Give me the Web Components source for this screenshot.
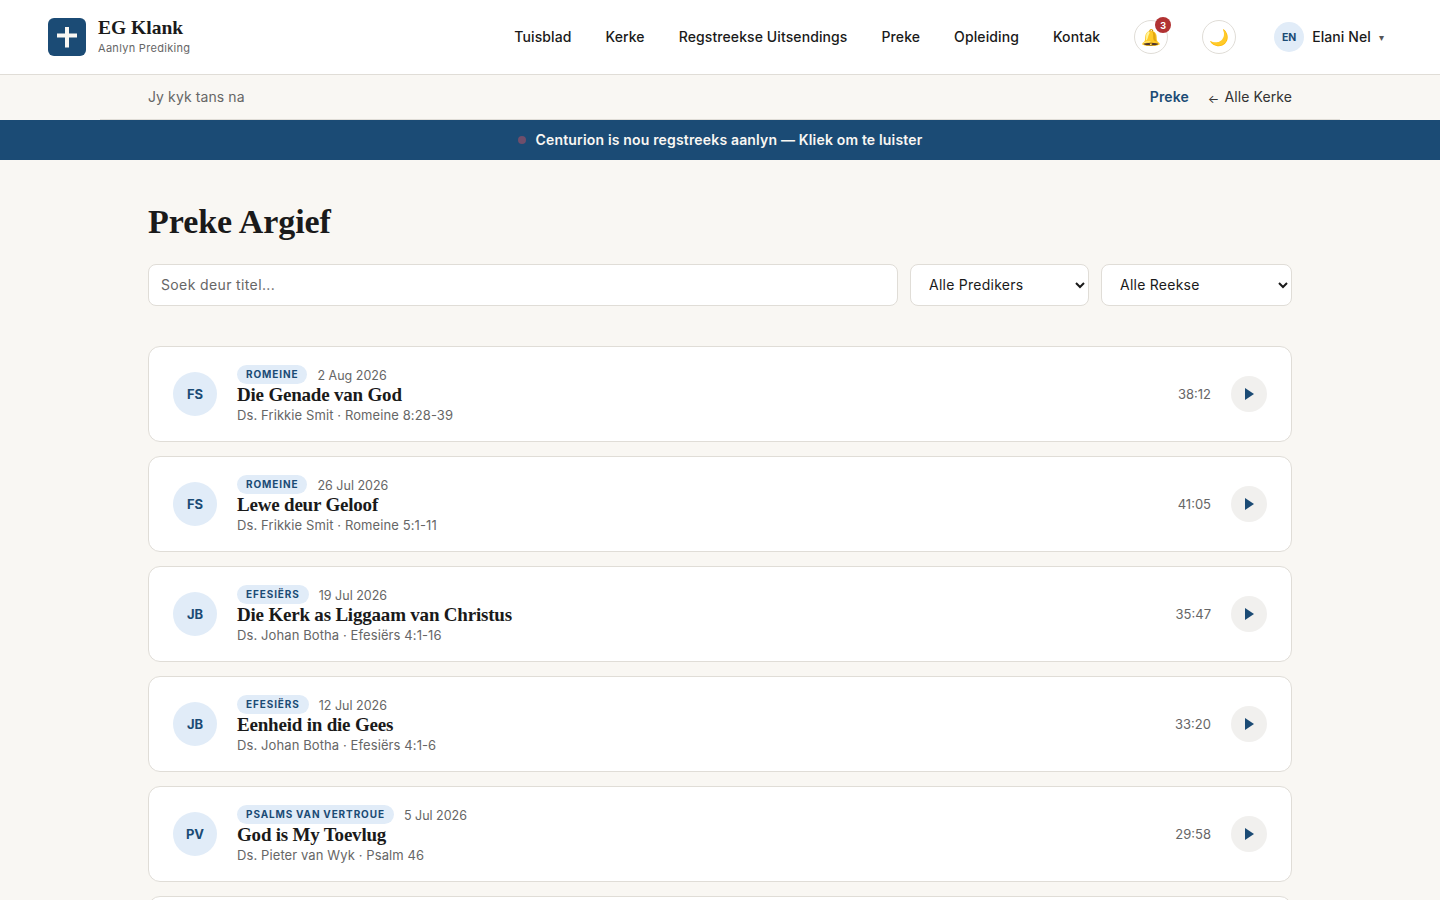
<!DOCTYPE html>
<html lang="af">
<head>
<meta charset="utf-8">
<title>Preke Argief</title>
<style>
    html, body { margin: 0; height: 900px; overflow: hidden; }
    body {
        background: #f9f7f3;
        color: #1a1a1a;
        font-family: "Inter", "Liberation Sans", sans-serif;
    }
</style>
</head>
<body>
<site-header></site-header>
<context-bar></context-bar>
<live-banner>Centurion is nou regstreeks aanlyn — Kliek om te luister</live-banner>
<archive-page>
    <sermon-card initials="FS" series="ROMEINE" date="2 Aug 2026" title="Die Genade van God" meta="Ds. Frikkie Smit · Romeine 8:28-39" time="38:12"></sermon-card>
    <sermon-card initials="FS" series="ROMEINE" date="26 Jul 2026" title="Lewe deur Geloof" meta="Ds. Frikkie Smit · Romeine 5:1-11" time="41:05"></sermon-card>
    <sermon-card initials="JB" series="EFESIËRS" date="19 Jul 2026" title="Die Kerk as Liggaam van Christus" meta="Ds. Johan Botha · Efesiërs 4:1-16" time="35:47"></sermon-card>
    <sermon-card initials="JB" series="EFESIËRS" date="12 Jul 2026" title="Eenheid in die Gees" meta="Ds. Johan Botha · Efesiërs 4:1-6" time="33:20"></sermon-card>
    <sermon-card initials="PV" series="PSALMS VAN VERTROUE" date="5 Jul 2026" title="God is My Toevlug" meta="Ds. Pieter van Wyk · Psalm 46" time="29:58"></sermon-card>
    <sermon-card empty></sermon-card>
</archive-page>

<script>
const SANS = '"Inter", "Liberation Sans", sans-serif';
const SERIF = '"Liberation Serif", serif';

class SiteHeader extends HTMLElement {
    constructor() {
        super();
        this.attachShadow({mode: 'open'});
        this.shadowRoot.innerHTML = `
        <style>
            :host {
                display: flex;
                align-items: center;
                height: 74px;
                padding: 0 48px;
                background: #fff;
                border-bottom: 1px solid #e0ddd7;
                font-family: ${SANS};
            }
            .logo { width: 38px; height: 38px; border-radius: 6px; background: #1b4b75; display: flex; align-items: center; justify-content: center; margin-right: 12px; }
            .brand { display: flex; flex-direction: column; }
            .name { font: bold 19.5px/19px ${SERIF}; color: #1a1a1a; }
            .tag { font-size: 11px; line-height: 16px; letter-spacing: .3px; color: #666; margin-top: 3px; }
            nav { margin-left: auto; display: flex; align-items: center; gap: 34px; }
            nav a { font-size: 14px; line-height: 16px; letter-spacing: .1px; font-weight: 500; color: #1a1a1a; }
            .round { position: relative; width: 32px; height: 32px; border: 1px solid #e0ddd7; border-radius: 50%; display: flex; align-items: center; justify-content: center; font-size: 16px; background: #fff; }
            .bell { margin-left: 34px; }
            .moon { margin-left: 34px; }
            .badge { position: absolute; top: -4px; right: -4px; width: 16px; height: 16px; border-radius: 50%; background: #b13232; color: #fff; font-size: 9px; font-weight: 700; display: flex; align-items: center; justify-content: center; }
            .user { display: flex; align-items: center; margin-left: 38px; margin-right: 8px; }
            .av { width: 30px; height: 30px; border-radius: 50%; background: #e1ecf8; color: #1b4b75; font-size: 10.5px; font-weight: 700; display: flex; align-items: center; justify-content: center; margin-right: 8px; }
            .uname { font-size: 14px; line-height: 16px; letter-spacing: .1px; font-weight: 500; }
            .caret { font: 10px "DejaVu Sans", sans-serif; color: #555; margin-left: 8px; }
        </style>
        <div class="logo"><svg width="20" height="22" viewBox="0 0 20 22"><path d="M8 1h4v6.500h8v4h-8V21.500H8V11.500H0v-4h8z" fill="#f9f7f3"/></svg></div>
        <div class="brand"><span class="name">EG Klank</span><span class="tag">Aanlyn Prediking</span></div>
        <nav>
            <a>Tuisblad</a><a>Kerke</a><a>Regstreekse Uitsendings</a><a>Preke</a><a>Opleiding</a><a>Kontak</a>
        </nav>
        <div class="round bell">🔔<span class="badge">3</span></div>
        <div class="round moon">🌙</div>
        <div class="user"><span class="av">EN</span><span class="uname">Elani Nel</span><span class="caret">▾</span></div>
        `;
    }
}
customElements.define('site-header', SiteHeader);

class ContextBar extends HTMLElement {
    constructor() {
        super();
        this.attachShadow({mode: 'open'});
        this.shadowRoot.innerHTML = `
        <style>
            :host { display: block; max-width: 1240px; margin: 0 auto; font-family: ${SANS}; }
            .bar { height: 44px; padding: 0 48px; display: flex; align-items: center; border-bottom: 1px solid #e0ddd7; font-size: 14px; line-height: 16px; letter-spacing: .1px; }
            .now { color: #666; }
            .right { margin-left: auto; display: flex; gap: 19px; align-items: center; }
            .preke { color: #1b4b75; font-weight: 600; }
            .back { color: #333; }
            .arrow { font-size: 12px; position: relative; top: 1px; margin-right: 1px; }
        </style>
        <div class="bar"><span class="now">Jy kyk tans na</span><div class="right"><span class="preke">Preke</span><span class="back"><span class="arrow">←</span> Alle Kerke</span></div></div>
        `;
    }
}
customElements.define('context-bar', ContextBar);

class LiveBanner extends HTMLElement {
    constructor() {
        super();
        this.attachShadow({mode: 'open'});
        this.shadowRoot.innerHTML = `
        <style>
            :host { display: flex; align-items: center; justify-content: center; height: 40px; background: #1b4b75; color: #f9f7f3; font: 600 14px/16px ${SANS}; letter-spacing: .17px; }
            i { width: 8px; height: 8px; border-radius: 50%; background: #6f4e6b; margin-right: 10px; }
        </style>
        <i></i><slot></slot>
        `;
    }
}
customElements.define('live-banner', LiveBanner);

class ArchivePage extends HTMLElement {
    constructor() {
        super();
        this.attachShadow({mode: 'open'});
        this.shadowRoot.innerHTML = `
        <style>
            :host { display: block; max-width: 1144px; margin: 0 auto; font-family: ${SANS}; }
            h1 { margin: 0; padding-top: 43px; font: bold 34px/38px ${SERIF}; letter-spacing: -.05px; color: #1a1a1a; }
            .filters { display: flex; gap: 12px; margin-top: 23px; margin-bottom: 40px; }
            .search { flex: 1; height: 42px; box-sizing: border-box; border: 1px solid #e0ddd7; border-radius: 8px; background: #fff; padding: 0 12px 1px; font: 14px ${SANS}; letter-spacing: .37px; color: #1a1a1a; }
            .search::placeholder { color: #666; }
            select { height: 42px; box-sizing: border-box; border: 1px solid #e0ddd7; border-radius: 8px; background: #fff; padding: 0 14px 1px; font: 14px ${SANS}; letter-spacing: .25px; color: #1a1a1a; }
            .pred { width: 179px; }
            .reeks { width: 191px; }
            .list { display: flex; flex-direction: column; gap: 14px; }
        </style>
        <h1>Preke Argief</h1>
        <div class="filters">
            <input class="search" placeholder="Soek deur titel...">
            <select class="pred"><option>Alle Predikers</option></select>
            <select class="reeks"><option>Alle Reekse</option></select>
        </div>
        <div class="list"><slot></slot></div>
        `;
    }
}
customElements.define('archive-page', ArchivePage);

class SermonCard extends HTMLElement {
    constructor() {
        super();
        this.attachShadow({mode: 'open'});
    }
    connectedCallback() {
        const a = n => this.getAttribute(n) || '';
        const css = `
            :host { display: flex; align-items: center; height: 96px; box-sizing: border-box; padding: 0 24px; background: #fff; border: 1px solid #e0ddd7; border-radius: 12px; font-family: ${SANS}; }
            .av { width: 44px; height: 44px; border-radius: 50%; background: #e1ecf8; color: #1b4b75; font-size: 13px; font-weight: 700; display: flex; align-items: center; justify-content: center; margin-right: 20px; flex: none; }
            .body { flex: 1; min-width: 0; display: flex; flex-direction: column; padding-top: 1px; }
            .top { display: flex; align-items: center; height: 19px; }
            .pill { background: #e1ecf8; color: #1b4b75; font-size: 10px; font-weight: 700; letter-spacing: .9px; word-spacing: -.5px; line-height: 19px; padding: 0 9px; border-radius: 10px; margin-right: 10px; }
            .date { font-size: 12.5px; color: #666; padding-top: 1px; }
            .title { font: bold 19px/21px ${SERIF}; letter-spacing: -.2px; color: #1a1a1a; }
            .meta { font-size: 13px; letter-spacing: .1px; line-height: 18px; color: #666; margin-top: 1px; }
            .time { font-size: 13px; color: #666; margin-right: 20px; }
            .play { width: 36px; height: 36px; box-sizing: border-box; padding-left: 1px; border-radius: 50%; background: #f1f0ee; display: flex; align-items: center; justify-content: center; flex: none; }
        `;
        if (this.hasAttribute('empty')) {
            this.shadowRoot.innerHTML = `<style>${css}</style>`;
            return;
        }
        this.shadowRoot.innerHTML = `
        <style>${css}</style>
        <div class="av">${a('initials')}</div>
        <div class="body">
            <div class="top"><span class="pill">${a('series')}</span><span class="date">${a('date')}</span></div>
            <div class="title">${a('title')}</div>
            <div class="meta">${a('meta')}</div>
        </div>
        <div class="time">${a('time')}</div>
        <div class="play"><svg width="9" height="12" viewBox="0 0 9 12"><path d="M0 0l9 6-9 6z" fill="#1b4b75"/></svg></div>
        `;
    }
}
customElements.define('sermon-card', SermonCard);
</script>
</body>
</html>
